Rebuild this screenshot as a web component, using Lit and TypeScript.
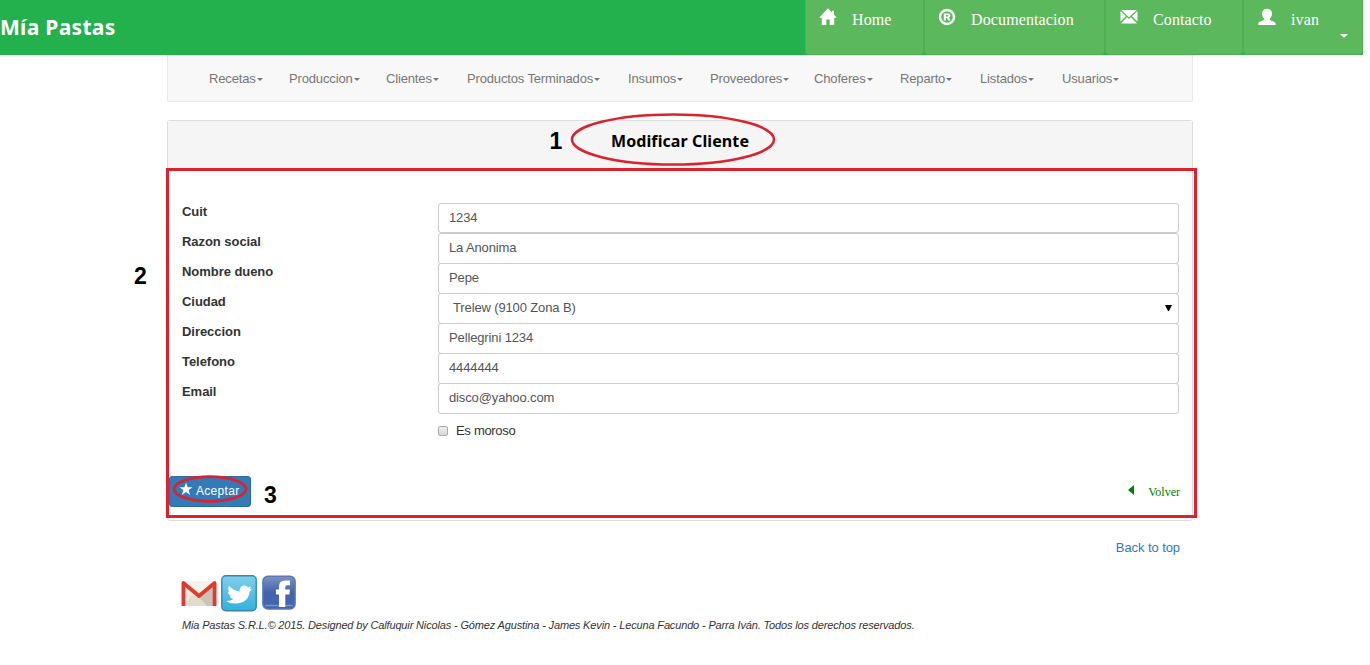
import { LitElement, html, css, svg } from "lit";
import { customElement } from "lit/decorators.js";

const ACTIONS = [
  { label: "Home", icon: "home", cls: "home" },
  { label: "Documentacion", icon: "registered", cls: "docs" },
  { label: "Contacto", icon: "envelope", cls: "contact" },
  { label: "ivan", icon: "user", cls: "account" },
];

const MENU = [
  "Recetas", "Produccion", "Clientes", "Productos Terminados", "Insumos",
  "Proveedores", "Choferes", "Reparto", "Listados", "Usuarios",
];

const FIELDS = [
  { label: "Cuit", value: "1234" },
  { label: "Razon social", value: "La Anonima" },
  { label: "Nombre dueno", value: "Pepe" },
  { label: "Ciudad", value: "Trelew (9100 Zona B)", select: true },
  { label: "Direccion", value: "Pellegrini 1234" },
  { label: "Telefono", value: "4444444" },
  { label: "Email", value: "disco@yahoo.com" },
];

const GLYPHS: Record<string, unknown> = {
  home: svg`<path d="M9 0.3 L0.2 9.8 H2.8 V17 H7.3 V11.5 H10.7 V17 H15.2 V9.8 H17.8 L15 6.8 V2.8 H13 V4.6 Z" />`,
  registered: svg`<circle cx="9" cy="9" r="7" fill="none" stroke="currentColor" stroke-width="2.4" />
    <path fill-rule="evenodd" d="M5.8 5.4 H10 Q12.4 5.4 12.4 7.5 Q12.4 9.1 11 9.6 L12.5 12.5 H10.2 L9 10 H8 V12.5 H5.8 Z M8 6.9 V8.5 H9.5 Q10.3 8.5 10.3 7.7 Q10.3 6.9 9.5 6.9 Z" />`,
  envelope: svg`<path d="M1.2 2 H16.8 L9 9.3 Z M0.5 3 L6 8.2 L0.5 13.6 Z M17.5 3 L12 8.2 L17.5 13.6 Z M7 9.2 L9 11.1 L11 9.2 L17 15.5 H1 Z" />`,
  user: svg`<path d="M9 0.8 C12.2 0.8 14 2.8 14 5.8 C14 8 13 9.8 11.8 10.8 V11.8 C13 12.9 17.7 13.5 17.7 15.8 V17 H0.3 V15.8 C0.3 13.5 5 12.9 6.2 11.8 V10.8 C5 9.8 4 8 4 5.8 C4 2.8 5.8 0.8 9 0.8 Z" />`,
  star: svg`<path d="M9 0.8 L11.1 6.6 H17.4 L12.4 10.4 L14.3 16.6 L9 12.9 L3.7 16.6 L5.6 10.4 L0.6 6.6 H6.9 Z" />`,
};

@customElement("app-glyph")
export class AppGlyph extends LitElement {
  static properties = { name: {} };
  declare name: string;
  static styles = css`
    :host { display: inline-block; }
    svg { display: block; width: 100%; height: 100%; fill: currentColor; }
  `;
  render() {
    return html`<svg viewBox="0 0 18 18">${GLYPHS[this.name]}</svg>`;
  }
}

@customElement("app-root")
export class AppRoot extends LitElement {
  static styles = css`
    :host {
      display: block; position: relative; height: 665px; overflow: hidden;
      background: #fff; color: #333;
      font: 13px/18px "Liberation Sans", Arial, sans-serif;
    }
    * { box-sizing: border-box; }
    .topbar { display: flex; width: 1363px; height: 55px; background: #22b14c; }
    .brand {
      flex: 1; color: #fff; white-space: nowrap;
      font: bold 21px/54px "Noto Sans", sans-serif; letter-spacing: 0.3px;
    }
    .action {
      display: flex; position: relative; height: 55px; padding: 8px 0 0 14px;
      border: 1px solid #4fb052; border-top: 0; border-radius: 0 0 4px 4px;
      background: #5cb85c; color: #fff;
      font: 16px/24px "Liberation Serif", serif; letter-spacing: 0.12px;
    }
    .action app-glyph { width: 18px; height: 18px; margin-right: 15px; }
    .action span { white-space: nowrap; }
    .home { width: 119px; }
    .docs { width: 181px; }
    .contact { width: 138px; }
    .account { width: 120px; }
    .home, .docs { padding-left: 13px; }
    .caret {
      display: inline-block; border: solid transparent; border-width: 3px 3px 0;
      border-top-color: currentColor; vertical-align: middle; margin-left: 1px;
    }
    .account .caret { position: absolute; right: 14px; bottom: 16px; border-width: 4px 4px 0; }
    .page { width: 1026px; margin-left: 167px; }
    .menu {
      display: grid; grid-template-columns: 80px 97px 81px 161px 82px 104px 86px 80px 82px auto;
      height: 47px; padding: 14px 0 0 41px; border: 1px solid #e7e7e7;
      border-radius: 0 0 2px 2px; background: #f8f8f8; color: #777; line-height: 17px;
      letter-spacing: -0.15px;
    }
    .menu div { white-space: nowrap; }
    .panel {
      height: 401px; margin-top: 18px; border: 1px solid #ddd; border-radius: 3px;
      background: #fff;
    }
    .heading {
      height: 48px; background: #f5f5f5; color: #000; text-align: center;
      font: bold 16px/41px "Noto Sans", sans-serif; letter-spacing: 0.1px;
    }
    .form { padding: 34px 13px 0 14px; }
    .row { display: flex; height: 30px; }
    .row label { width: 256px; font-weight: bold; letter-spacing: -0.05px; }
    .field {
      display: flex; justify-content: space-between; flex: none; width: 741px; height: 31px; padding: 0 6px 0 10px;
      border: 1px solid #ccc; border-radius: 3px; color: #555; line-height: 28px; letter-spacing: -0.13px;
    }
    .row:first-child .field { height: 30px; }
    .select { padding-left: 14px; }
    .arrow {
      border: solid transparent; border-width: 6px 3.5px 0; border-top-color: #000;
      height: 0; margin-top: 11px; width: 7px;
    }
    .check { display: flex; align-items: center; gap: 8px; padding: 9px 0 0 256px; letter-spacing: -0.3px; }
    .box {
      width: 10px; height: 10px; border: 1px solid #aaa; border-radius: 2px;
      background: linear-gradient(#eee, #d8d8d8);
    }
    .buttons { display: flex; justify-content: space-between; margin-top: 36px; padding: 0 12px 0 1px; }
    .accept {
      display: flex; width: 82px; height: 31px; padding: 0 0 0 9px; border: 1px solid #2e6da4;
      border-radius: 3px; background: #337ab7; color: #fff; font-size: 12px; line-height: 28px; white-space: nowrap;
      letter-spacing: 0.3px;
    }
    .accept app-glyph { width: 14px; height: 14px; margin: 5px 3px 0 0; }
    .back { display: flex; gap: 14px; color: #008000; font: 12px/32px "Liberation Serif", serif; }
    .left { width: 0; height: 0; margin-top: 9px; border: solid transparent; border-width: 5.5px 6px 5.5px 0; border-right-color: #008000; }
    .top { margin: 18px 13px 0 0; text-align: right; color: #337ab7; letter-spacing: -0.08px; }
    .social { display: flex; gap: 4px; margin: 18px 0 0 14px; height: 37px; }
    .social svg { width: 36px; height: 37px; }
    .legal { margin: 5px 0 0 15px; font-size: 11px; font-style: italic; line-height: 16px; white-space: nowrap; letter-spacing: -0.149px; }
    .marks { position: absolute; left: 0; top: 0; width: 1370px; height: 665px; fill: none; stroke: #d9232e; }
    .marks text { fill: #000; stroke: none; font: bold 23px "Liberation Sans", Arial, sans-serif; }
  `;

  renderSocial() {
    return html`<div class="social">
      <svg viewBox="0 0 36 37">
        <rect x="1" y="6" width="34" height="25" rx="2" fill="#eee9df" />
        <path d="M1 31 L14 18 L18 22 L22 18 L35 31 Z" fill="#e2dccf" />
        <path d="M18 22 L35 7 V31 H26 Z" fill="#cbc4b6" />
        <path d="M3 6 H33 L18 19 Z" fill="#f5f2ea" />
        <path d="M2.4 31 V8 L18 21 L33.6 8 V31" fill="none" stroke="#dc3b31" stroke-width="3.8" stroke-linejoin="round" />
      </svg>
      <svg viewBox="0 0 36 37">
        <defs><linearGradient id="t" x2="0" y2="1"><stop stop-color="#83cfea" /><stop offset="1" stop-color="#31b1dd" /></linearGradient></defs>
        <rect x="0.8" y="0.8" width="34.4" height="35" rx="4" fill="url(#t)" stroke="#3588a8" stroke-width="1.4" />
        <path fill="#fff" d="M8 10.5 Q12 15.5 18.5 16.5 Q18.5 11.5 22.5 10.6 Q25.5 10.2 27.2 12.4 L30 11.5 L28.6 14 L31 13.8 L28.6 16.8 Q28 24 22 27 Q12 30.5 5 26 Q9.5 26 12.5 24.2 Q9.5 23.5 8.6 21 H10.4 Q7 19.5 7 16.4 L8.8 17 Q6 14.5 8 10.5 Z" />
      </svg>
      <svg viewBox="0 0 36 37">
        <defs><linearGradient id="f" x2="0" y2="1"><stop stop-color="#7b92c6" /><stop offset=".5" stop-color="#4364aa" /><stop offset="1" stop-color="#4267af" /></linearGradient></defs>
        <rect x="1.9" y="1.2" width="32.2" height="32.8" rx="5" fill="url(#f)" stroke="#5e77b4" stroke-width="1.5" />
        <path d="M4 30.5 H32" stroke="#7794cb" stroke-width="1.5" />
        <path fill="#fff" d="M18 32 V19.5 H15 V14.5 H18 V11.5 Q18 5.5 24 5.5 H29 V10.3 H26.3 Q24.3 10.3 24.3 12.3 V14.5 H29 L28.4 19.5 H24.3 V32 Z" />
      </svg>
    </div>`;
  }

  render() {
    return html`
      <header class="topbar">
        <div class="brand">Mía Pastas</div>
        ${ACTIONS.map((a) => html`<div class="action ${a.cls}">
          <app-glyph name=${a.icon}></app-glyph><span>${a.label}</span>
          ${a.icon === "user" ? html`<i class="caret"></i>` : ""}
        </div>`)}
      </header>
      <main class="page">
        <nav class="menu">${MENU.map((m) => html`<div>${m}<i class="caret"></i></div>`)}</nav>
        <section class="panel">
          <div class="heading">Modificar Cliente</div>
          <div class="form">
            <div>${FIELDS.map((f) => html`<div class="row">
              <label>${f.label}</label>
              <div class="field ${f.select ? "select" : ""}"><span>${f.value}</span>${f.select ? html`<i class="arrow"></i>` : ""}</div>
            </div>`)}</div>
            <div class="check"><i class="box"></i><span>Es moroso</span></div>
          </div>
          <div class="buttons">
            <div class="accept"><app-glyph name="star"></app-glyph>Aceptar</div>
            <div class="back"><i class="left"></i><span>Volver</span></div>
          </div>
        </section>
        <div class="top">Back to top</div>
        ${this.renderSocial()}
        <div class="legal">Mia Pastas S.R.L.© 2015. Designed by Calfuquir Nicolas - Gómez Agustina - James Kevin - Lecuna Facundo - Parra Iván. Todos los derechos reservados.</div>
      </main>
      <svg class="marks" viewBox="0 0 1370 665">
        <ellipse cx="673" cy="139.5" rx="101" ry="25" stroke-width="2.6" />
        <rect x="167.5" y="169.5" width="1028" height="347" stroke-width="3" />
        <ellipse cx="210" cy="489" rx="36" ry="12.3" stroke-width="2.8" />
        <text x="549.5" y="149">1</text>
        <text x="134" y="284">2</text>
        <text x="264" y="503">3</text>
      </svg>
    `;
  }
}
